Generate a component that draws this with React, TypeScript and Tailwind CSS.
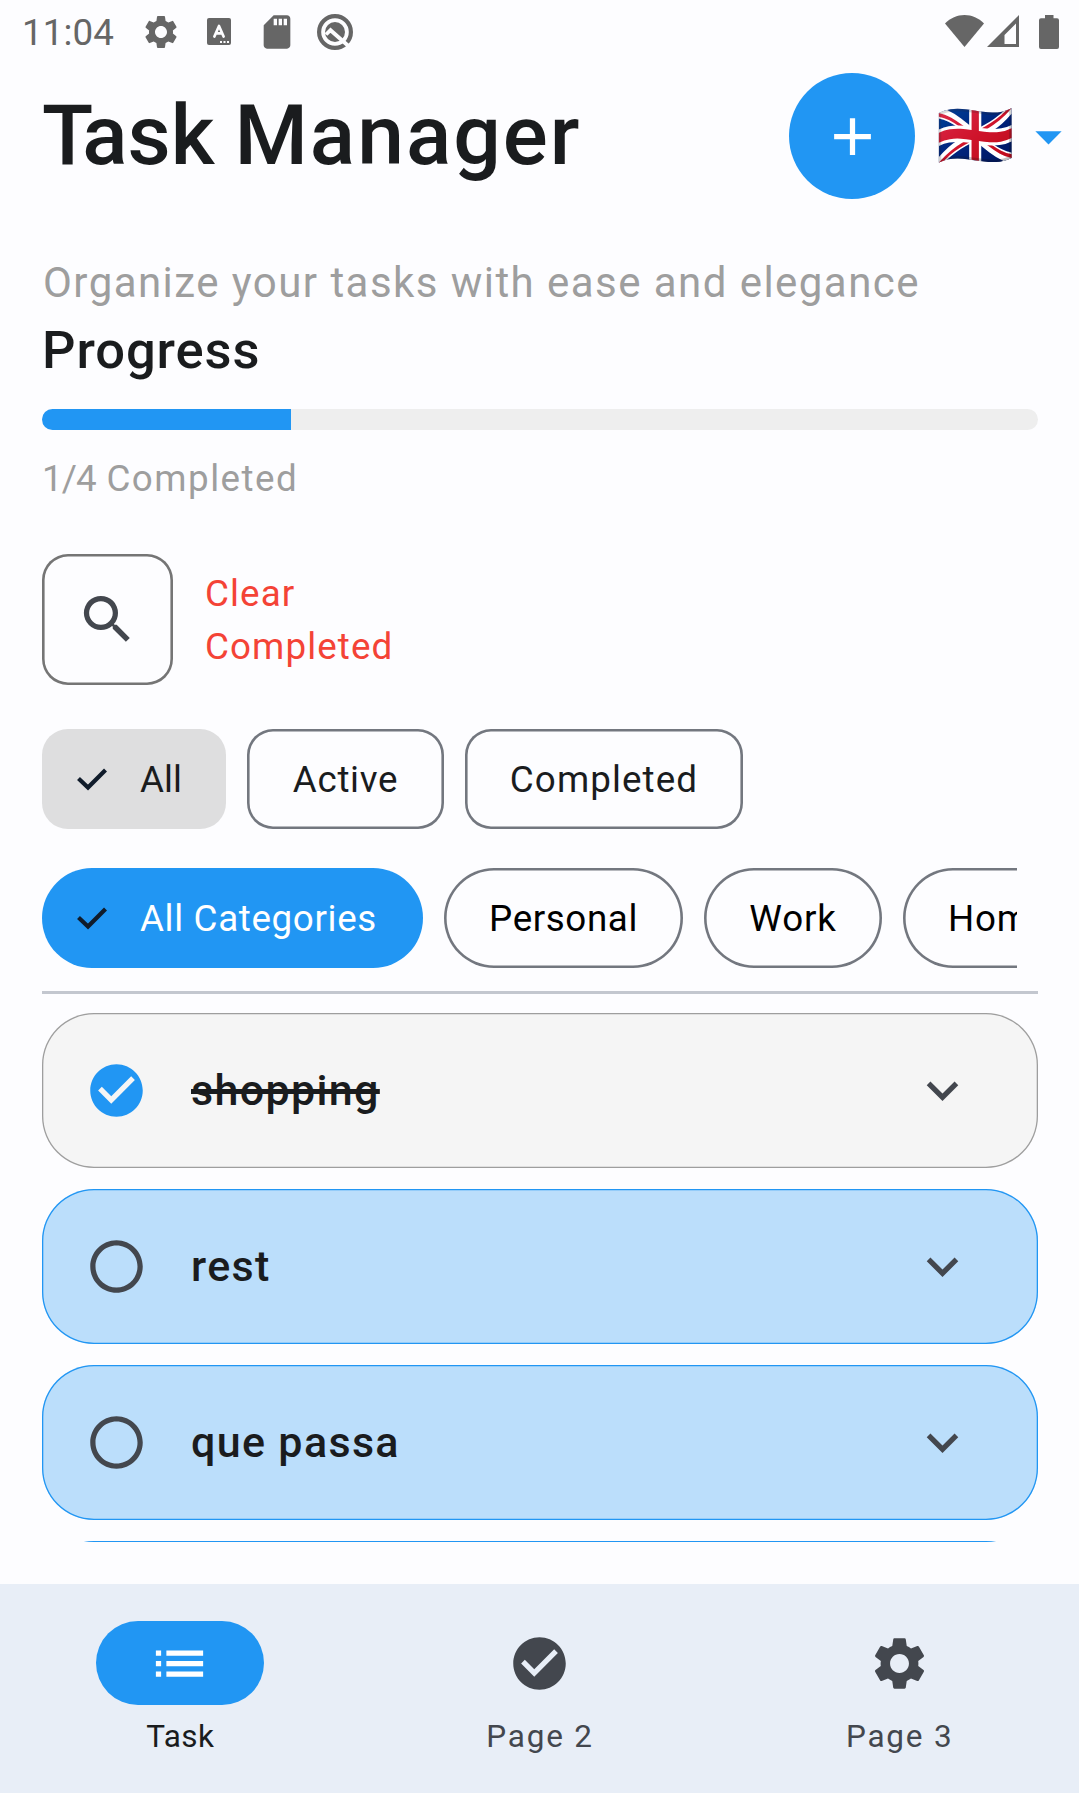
import type { ReactNode } from 'react';
import {
  MdAdd,
  MdArrowDropDown,
  MdCheckCircle,
  MdExpandMore,
  MdList,
  MdRadioButtonUnchecked,
  MdSdCard,
  MdSearch,
  MdSettings,
} from 'react-icons/md';

function StatusBar() {
  return (
    <div className="flex h-[63px] shrink-0 items-center text-[#666666]">
      <span className="w-[119px] pt-[3px] pl-[22px] text-[36.75px] leading-none tracking-[0.1px]">11:04</span>
      <MdSettings className="ml-[22px] size-10" />
      <svg className="ml-[26px] h-[27px] w-6" viewBox="0 0 24 27">
        <rect width="24" height="27" rx="2" fill="currentColor" />
        <path d="M7.4 18.5 12 8l4.6 10.500M9 15.300h6" fill="none" stroke="#fdfdff" strokeWidth="2.7" strokeLinecap="round" strokeLinejoin="round" />
        <path d="M13 23h2v2h-2zM16.500 23h2v2h-2zM20 23h2v2h-2z" fill="#fdfdff" />
      </svg>
      <MdSdCard className="ml-[26px] size-10" />
      <svg className="ml-5 size-9" viewBox="0 0 36 36">
        <circle cx="18" cy="18" r="15.900" fill="none" stroke="currentColor" strokeWidth="4.200" />
        <circle cx="18" cy="18" r="10" fill="currentColor" />
        <path d="m9 20.500 4.500-4.300L32 32.500" fill="none" stroke="#fdfdff" strokeWidth="3.800" />
      </svg>
      <svg className="mt-[-2px] ml-auto h-8 w-[39px]" viewBox="0 0 39 32">
        <path d="M19.500 32 0 8.500C5.500 3 12 0 19.500 0S33.500 3 39 8.500Z" fill="currentColor" />
      </svg>
      <svg className="mt-[-1px] ml-[3.500px] size-8" viewBox="0 0 32 32">
        <path d="M32 0v32H0ZM29 8.500 17.500 20v9H29Z" fill="currentColor" fillRule="evenodd" />
      </svg>
      <svg className="mr-5 ml-5 h-[34px] w-5" viewBox="0 0 20 34">
        <path d="M6 0h8.500v3.200H18a2 2 0 0 1 2 2V32a2 2 0 0 1-2 2H2a2 2 0 0 1-2-2V5.200a2 2 0 0 1 2-2h4Z" fill="currentColor" />
      </svg>
    </div>
  );
}

function Header() {
  return (
    <header className="mt-[10px] flex h-[126px] shrink-0 items-center pl-[42px]">
      <h1 className="flex-1 text-[84px] leading-[126px] font-medium tracking-[2px] whitespace-nowrap [word-spacing:-3px]">
        <span className="tracking-[-11px]">T</span>
        <span className="tracking-[0px]">ask</span> Manager
      </h1>
      <button className="flex size-[126px] items-center justify-center rounded-full bg-[#2196f3] text-white">
        <MdAdd className="size-[63px]" />
      </button>
      <button className="ml-[21px] flex w-[143px] items-center">
        <span className="w-[80px] text-[63px] leading-[74px]">🇬🇧</span>
        <MdArrowDropDown className="ml-[3px] size-[63px] shrink-0 text-[#2196f3]" />
      </button>
    </header>
  );
}

function Chip({ children, look, selected }: { children: ReactNode; look: string; selected?: boolean }) {
  return (
    <button className={`flex h-[100px] shrink-0 items-center text-[36.75px] whitespace-nowrap ${look}`}>
      {selected ? (
        <svg className="mr-[33px] ml-[35px] h-6 w-[30px] text-[#101c2b]" viewBox="0 0 30 24">
          <path d="M1.500 11.500 11 20.500 28.500 3" fill="none" stroke="currentColor" strokeWidth="4.200" />
        </svg>
      ) : null}
      <span className="pt-[2px]">{children}</span>
    </button>
  );
}

const outline = 'justify-center shadow-[inset_0_0_0_2.6px_#73777f]';

function TaskCard({ title, done }: { title: string; done?: boolean }) {
  return (
    <li
      className={`flex h-[155px] shrink-0 items-center rounded-[52px] pl-[43px] ${
        done ? 'bg-[#f5f5f5] shadow-[inset_0_0_0_1.3px_#9e9e9e]' : 'bg-[#bbdefb] shadow-[inset_0_0_0_1.3px_#2196f3]'
      }`}
    >
      {done ? (
        <MdCheckCircle className="size-[63px] text-[#2196f3]" />
      ) : (
        <MdRadioButtonUnchecked className="size-[63px] text-[#43474e]" />
      )}
      <span className="ml-[43px] text-[43px] leading-[60px] font-medium tracking-[1.35px]">
        <span className={done ? 'line-through decoration-[5px]' : ''}>{title}</span>
      </span>
      <MdExpandMore className="mr-[64px] ml-auto size-[63px] text-[#43474e]" />
    </li>
  );
}

function NavItem({ icon, label, active }: { icon: ReactNode; label: string; active?: boolean }) {
  return (
    <button className={`flex flex-1 flex-col items-center pt-[37px] ${active ? 'text-[#1a1c1e]' : 'text-[#43474e]'}`}>
      <span
        className={`flex h-[84px] w-[168px] items-center justify-center rounded-full ${active ? 'bg-[#2196f3] text-white' : ''}`}
      >
        {icon}
      </span>
      <span className={`mt-[11px] pl-[1px] text-[31.5px] leading-[42px] ${active ? 'tracking-[0.5px]' : 'tracking-[1.8px]'}`}>{label}</span>
    </button>
  );
}

export default function App() {
  const total = 4;
  const completed = 1;
  return (
    <div className="flex h-[1793px] w-[1079px] flex-col overflow-hidden bg-[#fdfdff] font-['Roboto','Noto_Color_Emoji',sans-serif] text-[#1a1c1e]">
      <StatusBar />
      <Header />
      <main className="flex h-[1343px] shrink-0 flex-col overflow-hidden pr-[41px] pl-[42px]">
        <p className="mt-[54px] pl-px text-[42px] leading-[60px] tracking-[1.45px] whitespace-nowrap text-[#9e9e9e]">
          Organize your tasks with ease and elegance
        </p>
        <h2 className="mt-[6px] text-[52.5px] leading-[63px] font-medium tracking-[0.9px]">Progress</h2>
        <div className="mt-[27px] h-[21px] shrink-0 overflow-hidden rounded-[10.5px] bg-[#eeeeee]">
          <div className="h-full bg-[#2196f3]" style={{ width: `${(completed / total) * 100}%` }} />
        </div>
        <p className="mt-[23px] text-[36.75px] leading-[52px] tracking-[1.5px] text-[#9e9e9e]">
          <span className="tracking-[-0.9px]">
            {completed}/{total}
          </span>{' '}
          Completed
        </p>
        <div className="mt-[49px] flex h-[131px] shrink-0 items-center">
          <button className="flex size-[131px] items-center justify-center rounded-[26px] shadow-[inset_0_0_0_2.6px_#757575]">
            <MdSearch className="size-[63px] text-[#43474e]" />
          </button>
          <button className="ml-[32px] w-[200px] text-left text-[36.75px] leading-[53px] tracking-[1.1px] text-[#f44336]">
            Clear Completed
          </button>
        </div>
        <div className="mt-[44px] flex shrink-0 gap-[21px]">
          <Chip look="w-[184px] rounded-[26px] bg-[#dededf]" selected>
            All
          </Chip>
          <Chip look={`w-[197px] rounded-[26px] tracking-[0.7px] ${outline}`}>Active</Chip>
          <Chip look={`w-[278px] rounded-[26px] tracking-[1.1px] ${outline}`}>Completed</Chip>
        </div>
        <div className="mt-[39px] mr-[21px] flex shrink-0 gap-[21px] overflow-hidden">
          <Chip look="w-[381px] rounded-full bg-[#2196f3] tracking-[0.65px] text-white" selected>
            All Categories
          </Chip>
          <Chip look={`w-[239px] rounded-full tracking-[0.6px] text-black ${outline}`}>Personal</Chip>
          <Chip look={`w-[178px] rounded-full tracking-[0.8px] text-black ${outline}`}>Work</Chip>
          <Chip look={`w-[192px] rounded-full tracking-[0.8px] text-black ${outline}`}>Home</Chip>
        </div>
        <div className="mt-[23px] h-[2.6px] shrink-0 bg-[#c3c7cf]" />
        <ul className="mt-[19.400px] flex flex-col gap-[21px]">
          <TaskCard title="shopping" done />
          <TaskCard title="rest" />
          <TaskCard title="que passa" />
          <TaskCard title="" />
        </ul>
      </main>
      <nav className="mt-auto flex h-[209px] shrink-0 bg-[#e8eef7]">
        <NavItem icon={<MdList className="size-[63px]" />} label="Task" active />
        <NavItem icon={<MdCheckCircle className="size-[63px]" />} label="Page 2" />
        <NavItem icon={<MdSettings className="size-[63px]" />} label="Page 3" />
      </nav>
    </div>
  );
}
